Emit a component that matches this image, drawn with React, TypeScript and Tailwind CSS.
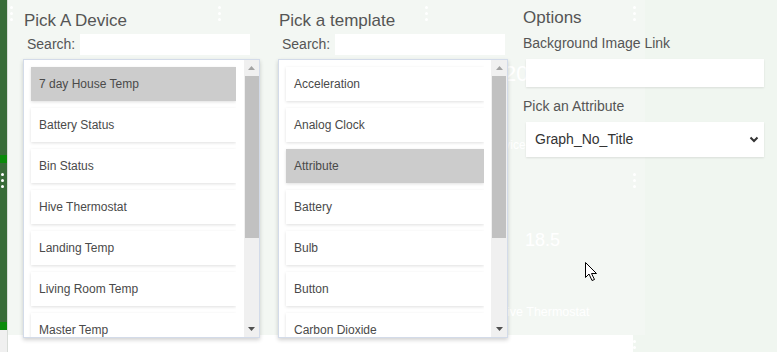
import React from 'react';

const devices = [
  '7 day House Temp',
  'Battery Status',
  'Bin Status',
  'Hive Thermostat',
  'Landing Temp',
  'Living Room Temp',
  'Master Temp',
];

const templates = [
  'Acceleration',
  'Analog Clock',
  'Attribute',
  'Battery',
  'Bulb',
  'Button',
  'Carbon Dioxide',
];

function Dots({ className }: { className: string }) {
  return (
    <div className={`absolute flex flex-col gap-[3px] ${className}`}>
      <span className="w-[3px] h-[3px] rounded-full bg-white" />
      <span className="w-[3px] h-[3px] rounded-full bg-white" />
      <span className="w-[3px] h-[3px] rounded-full bg-white" />
    </div>
  );
}

function SearchRow({ indent }: { indent: string }) {
  return (
    <div className={`flex items-center h-[21px] mt-[3px] ${indent}`}>
      <span className="text-[14px] leading-[21px] text-[#555]">Search:</span>
      <input className="ml-[5px] w-[170px] h-[21px] bg-white outline-none" />
    </div>
  );
}

function PickList({
  items,
  selected,
  cardWidth,
  gap,
  barWidth,
}: {
  items: string[];
  selected: string;
  cardWidth: string;
  gap: string;
  barWidth: string;
}) {
  return (
    <div className="relative z-10 mt-[4px] h-[279px] flex bg-white border border-[#d3dbe9] shadow-[0_2px_4px_rgba(0,0,0,0.18)]">
      <div className={`pl-[7px] pt-[7px] overflow-hidden flex flex-col gap-[7px] ${cardWidth}`} style={{ boxSizing: 'content-box' }}>
        {items.map((item) => (
          <div
            key={item}
            className={`shrink-0 h-[34px] pl-[8px] flex items-center text-[12px] text-[#4a4a4a] shadow-[0_1px_3px_rgba(0,0,0,0.13)] ${
              item === selected ? 'bg-[#cccccc]' : 'bg-white'
            }`}
          >
            {item}
          </div>
        ))}
      </div>
      <div className={`${gap}`} />
      <div className={`${barWidth} bg-[#f0f0f0] flex flex-col items-center`}>
        <div className="h-[16px] flex items-center justify-center">
          <svg width="7" height="4" viewBox="0 0 7 4">
            <path d="M0 4 L3.5 0 L7 4 Z" fill="#a3a3a3" />
          </svg>
        </div>
        <div className="w-[14px] h-[162px] bg-[#c1c1c1]" />
        <div className="flex-1" />
        <div className="h-[16px] flex items-center justify-center">
          <svg width="7" height="4" viewBox="0 0 7 4">
            <path d="M0 0 L7 0 L3.5 4 Z" fill="#505050" />
          </svg>
        </div>
      </div>
    </div>
  );
}

export default function App() {
  return (
    <div className="relative w-[777px] h-[352px] overflow-hidden flex bg-white font-['Liberation_Sans',Arial,sans-serif]">
      {/* green side strip */}
      <div className="w-[7px] bg-[#386b38] flex flex-col">
        <div className="h-[155px]" />
        <div className="h-[8px] bg-[#0a8a0a]" />
        <div className="h-[159px]" />
        <div className="h-[8px] bg-[#0a8a0a]" />
        <div className="flex-1 bg-[#f0f0f0]" />
      </div>
      <div className="w-px bg-[#d8dcd8]" />

      <div className="flex-1 flex flex-col">
        <div className="h-[335px] flex pl-[15px] bg-[linear-gradient(to_right,#f3f7f3_637px,#f0f6f0_637px)]">
          {/* Pick A Device */}
          <div className="w-[237px] pt-[11px]">
            <h2 className="ml-px text-[17px] leading-[20px] text-[#555]">Pick A Device</h2>
            <SearchRow indent="ml-[4px]" />
            <PickList
              items={devices}
              selected="7 day House Temp"
              cardWidth="w-[205px]"
              gap="w-[8px]"
              barWidth="w-[15px]"
            />
          </div>

          {/* Pick a template */}
          <div className="w-[230px] ml-[18px] pt-[11px]">
            <h2 className="ml-px text-[17px] leading-[20px] text-[#555]">Pick a template</h2>
            <SearchRow indent="ml-[4px]" />
            <PickList
              items={templates}
              selected="Attribute"
              cardWidth="w-[198px]"
              gap="w-[7px]"
              barWidth="w-[16px]"
            />
          </div>

          {/* Options */}
          <div className="w-[241px] ml-[15px] pt-[8px] relative z-10">
            <h2 className="text-[17px] leading-[20px] text-[#555]">Options</h2>
            <div className="mt-[7px] text-[14px] leading-[16px] text-[#555]">Background Image Link</div>
            <input className="block mt-[8px] ml-[3px] w-[238px] h-[28px] bg-white outline-none shadow-[0_1px_2px_rgba(0,0,0,0.1)]" />
            <div className="mt-[11px] text-[14px] leading-[16px] text-[#555]">Pick an Attribute</div>
            <div className="mt-[8px] ml-[3px] w-[238px] h-[35px] bg-white flex items-center justify-between pl-[9px] pr-[5px] shadow-[0_1px_2px_rgba(0,0,0,0.1)]">
              <span className="text-[14px] text-[#333]">Graph_No_Title</span>
              <svg width="10" height="7" viewBox="0 0 10 7">
                <path d="M1.5 1.5 L5 5 L8.5 1.5" fill="none" stroke="#333" strokeWidth="2" />
              </svg>
            </div>
          </div>
        </div>
        <div className="flex-1 flex">
          <div className="w-[625px] bg-white" />
          <div className="flex-1 bg-[#f0f6f0]" />
        </div>
      </div>

      {/* faded dashboard tiles behind the overlay */}
      <span className="absolute left-[504px] top-[57px] text-[22px] text-white">20</span>
      <span className="absolute left-[489px] top-[136px] text-[12px] text-white">Device</span>
      <span className="absolute left-[525px] top-[227px] text-[18px] text-white">18.5</span>
      <span className="absolute left-[498px] top-[303px] text-[12.5px] text-white">Hive Thermostat</span>
      <Dots className="left-[10px] top-[6px]" />
      <Dots className="left-[218px] top-[6px]" />
      <Dots className="left-[425px] top-[6px]" />
      <Dots className="left-[633px] top-[6px]" />
      <Dots className="left-[633px] top-[173px]" />
      <Dots className="left-[633px] top-[340px]" />
      <Dots className="left-[1px] top-[173px]" />

      {/* mouse pointer */}
      <svg className="absolute left-[585px] top-[262px]" width="13" height="20" viewBox="0 0 13 20">
        <path d="M0.5 0.5 L0.5 15.5 L4 12 L7 18.5 L9.5 17.5 L6.5 11.5 L11.5 11.5 Z" fill="white" stroke="black" strokeWidth="1" />
      </svg>
    </div>
  );
}
